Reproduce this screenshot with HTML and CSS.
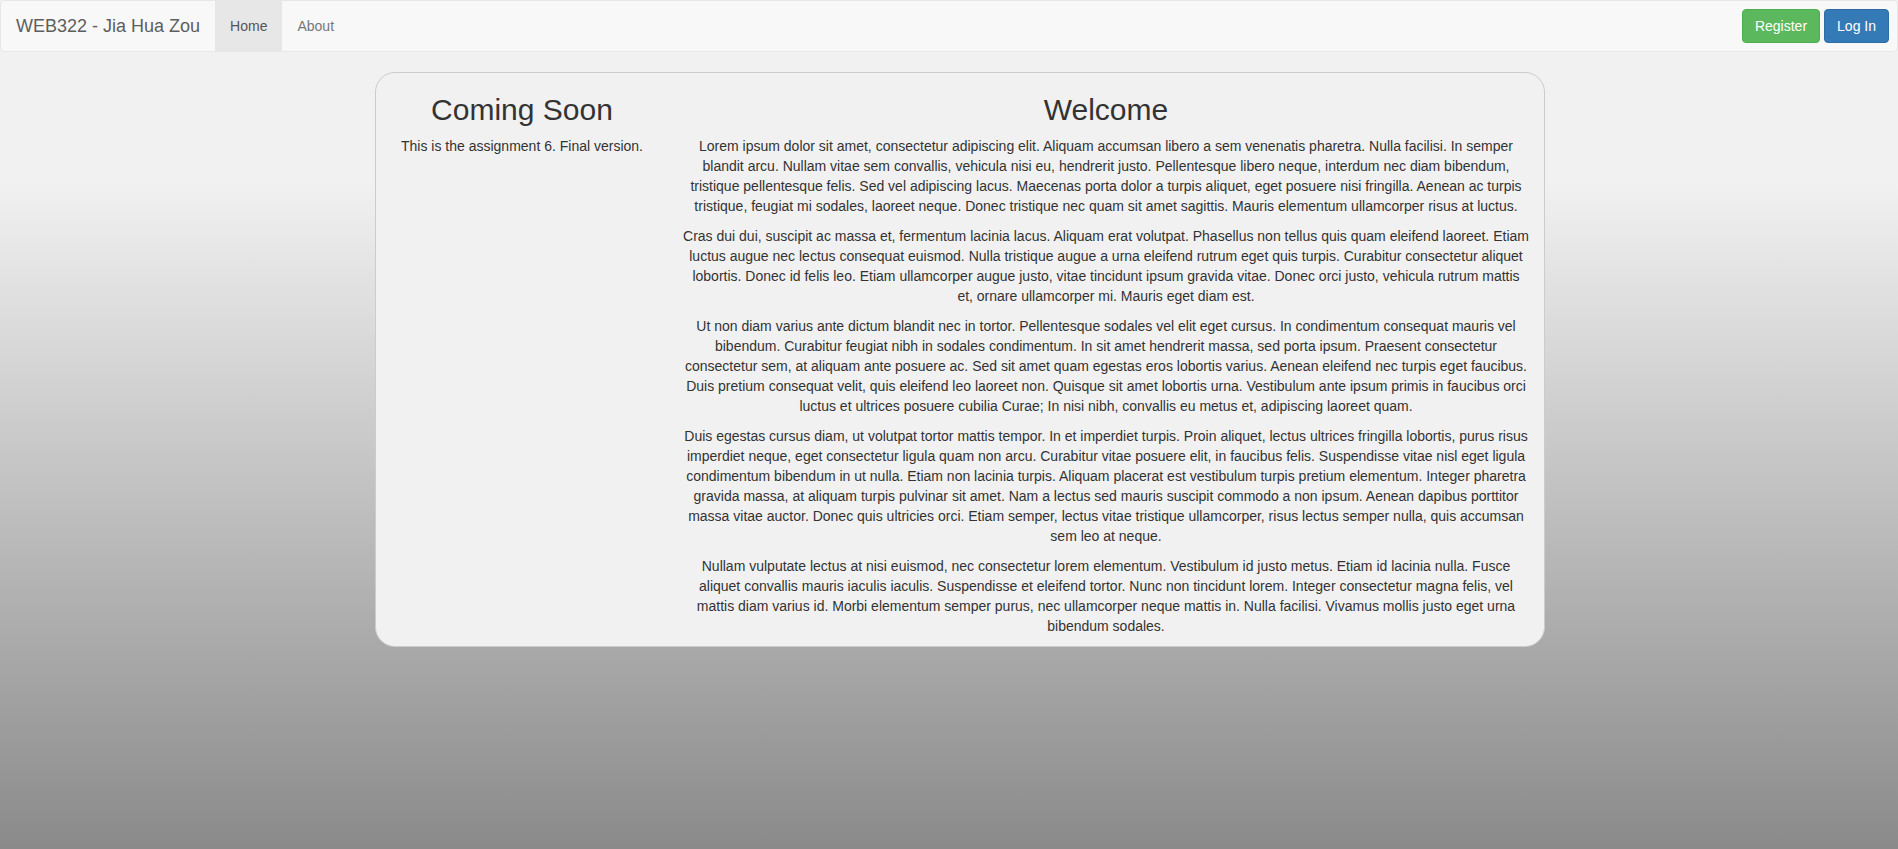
FILE: index.html
```html
<!DOCTYPE html>
<html lang="en">
<head>
<meta charset="utf-8">
<title>WEB322 - Jia Hua Zou</title>
<link rel="stylesheet" href="styles.css">
</head>
<body>
<nav class="navbar">
  <a class="brand" href="#">WEB322 - Jia Hua Zou</a>
  <ul class="nav-links">
    <li><a class="nav-link active" href="#">Home</a></li>
    <li><a class="nav-link" href="#">About</a></li>
  </ul>
  <div class="nav-actions">
    <button type="button" class="btn btn-success">Register</button>
    <button type="button" class="btn btn-primary">Log In</button>
  </div>
</nav>
<main class="page">
  <div class="card">
    <section class="column">
      <h2>Coming Soon</h2>
      <p>This is the assignment 6. Final version.</p>
    </section>
    <section class="column">
      <h2>Welcome</h2>
      <p>Lorem ipsum dolor sit amet, consectetur adipiscing elit. Aliquam accumsan libero a sem venenatis pharetra. Nulla facilisi. In semper blandit arcu. Nullam vitae sem convallis, vehicula nisi eu, hendrerit justo. Pellentesque libero neque, interdum nec diam bibendum, tristique pellentesque felis. Sed vel adipiscing lacus. Maecenas porta dolor a turpis aliquet, eget posuere nisi fringilla. Aenean ac turpis tristique, feugiat mi sodales, laoreet neque. Donec tristique nec quam sit amet sagittis. Mauris elementum ullamcorper risus at luctus.</p>
      <p>Cras dui dui, suscipit ac massa et, fermentum lacinia lacus. Aliquam erat volutpat. Phasellus non tellus quis quam eleifend laoreet. Etiam luctus augue nec lectus consequat euismod. Nulla tristique augue a urna eleifend rutrum eget quis turpis. Curabitur consectetur aliquet lobortis. Donec id felis leo. Etiam ullamcorper augue justo, vitae tincidunt ipsum gravida vitae. Donec orci justo, vehicula rutrum mattis et, ornare ullamcorper mi. Mauris eget diam est.</p>
      <p>Ut non diam varius ante dictum blandit nec in tortor. Pellentesque sodales vel elit eget cursus. In condimentum consequat mauris vel bibendum. Curabitur feugiat nibh in sodales condimentum. In sit amet hendrerit massa, sed porta ipsum. Praesent consectetur consectetur sem, at aliquam ante posuere ac. Sed sit amet quam egestas eros lobortis varius. Aenean eleifend nec turpis eget faucibus. Duis pretium consequat velit, quis eleifend leo laoreet non. Quisque sit amet lobortis urna. Vestibulum ante ipsum primis in faucibus orci luctus et ultrices posuere cubilia Curae; In nisi nibh, convallis eu metus et, adipiscing laoreet quam.</p>
      <p>Duis egestas cursus diam, ut volutpat tortor mattis tempor. In et imperdiet turpis. Proin aliquet, lectus ultrices fringilla lobortis, purus risus imperdiet neque, eget consectetur ligula quam non arcu. Curabitur vitae posuere elit, in faucibus felis. Suspendisse vitae nisl eget ligula condimentum bibendum in ut nulla. Etiam non lacinia turpis. Aliquam placerat est vestibulum turpis pretium elementum. Integer pharetra gravida massa, at aliquam turpis pulvinar sit amet. Nam a lectus sed mauris suscipit commodo a non ipsum. Aenean dapibus porttitor massa vitae auctor. Donec quis ultricies orci. Etiam semper, lectus vitae tristique ullamcorper, risus lectus semper nulla, quis accumsan sem leo at neque.</p>
      <p>Nullam vulputate lectus at nisi euismod, nec consectetur lorem elementum. Vestibulum id justo metus. Etiam id lacinia nulla. Fusce aliquet convallis mauris iaculis iaculis. Suspendisse et eleifend tortor. Nunc non tincidunt lorem. Integer consectetur magna felis, vel mattis diam varius id. Morbi elementum semper purus, nec ullamcorper neque mattis in. Nulla facilisi. Vivamus mollis justo eget urna bibendum sodales.</p>
    </section>
  </div>
</main>
</body>
</html>
```
FILE: styles.css
```css
* {
  box-sizing: border-box;
}

html {
  min-height: 100%;
  background: linear-gradient(#f1f1f1 183px, #8a8a8a);
}

body {
  margin: 0;
  color: #333;
  font: 14px/20px "Liberation Sans", Arial, sans-serif;
}

.navbar {
  display: flex;
  align-items: center;
  min-height: 52px;
  margin-bottom: 20px;
  padding-right: 8px;
  background: #f8f8f8;
  border: 1px solid #e7e7e7;
  border-radius: 4px;
}

.brand,
.nav-link {
  display: block;
  padding: 15px;
  color: #777;
  text-decoration: none;
}

.brand {
  color: #5e5e5e;
  font-size: 18px;
}

.nav-links {
  display: flex;
  margin: 0;
  padding: 0;
  list-style: none;
}

.nav-link.active {
  color: #555;
  background: #e7e7e7;
}

.nav-actions {
  display: flex;
  gap: 4px;
  margin-left: auto;
}

.btn {
  padding: 6px 12px;
  border: 1px solid;
  border-radius: 4px;
  color: #fff;
  font: inherit;
  cursor: pointer;
}

.btn-success {
  background: #5cb85c;
  border-color: #4cae4c;
}

.btn-primary {
  background: #337ab7;
  border-color: #2e6da4;
}

.page {
  padding-left: 22px;
}

.card {
  display: grid;
  grid-template-columns: 1fr 3fr;
  max-width: 1170px;
  margin: 0 auto;
  background: #f1f1f1;
  border: 1px solid #ccc;
  border-radius: 20px;
  text-align: center;
}

.column {
  padding: 0 15px;
}

h2 {
  margin: 20px 0 10px;
  font-size: 30px;
  font-weight: 500;
  line-height: 33px;
}

p {
  margin: 0 0 10px;
}
```
